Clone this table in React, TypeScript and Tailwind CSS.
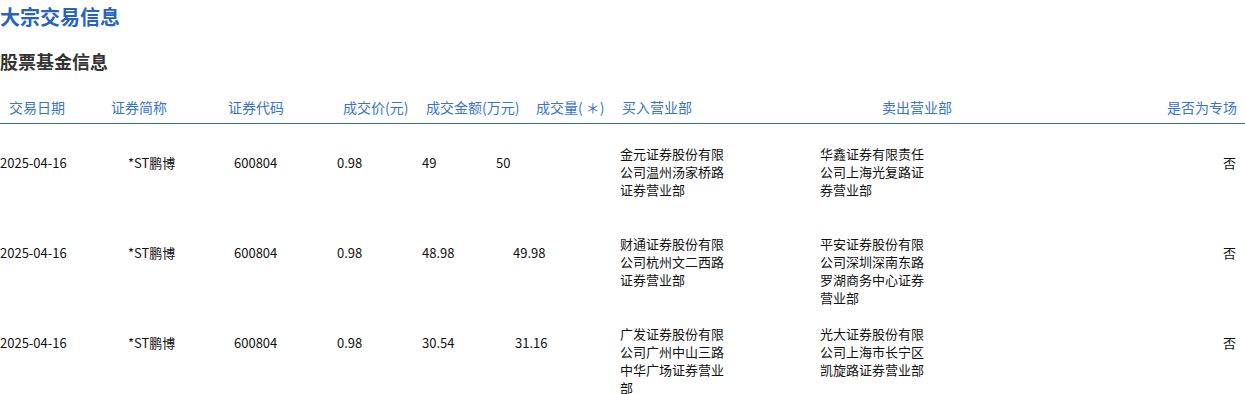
import React from 'react';

type Trade = {
  date: string;
  name: string;
  code: string;
  price: string;
  amount: string;
  volume: string;
  volPad: string;
  buyer: string;
  seller: string;
  special: string;
};

const trades: Trade[] = [
  {
    date: '2025-04-16',
    name: '*ST鹏博',
    code: '600804',
    price: '0.98',
    amount: '49',
    volume: '50',
    volPad: 'pl-0',
    buyer: '金元证券股份有限公司温州汤家桥路证券营业部',
    seller: '华鑫证券有限责任公司上海光复路证券营业部',
    special: '否',
  },
  {
    date: '2025-04-16',
    name: '*ST鹏博',
    code: '600804',
    price: '0.98',
    amount: '48.98',
    volume: '49.98',
    volPad: 'pl-[17px]',
    buyer: '财通证券股份有限公司杭州文二西路证券营业部',
    seller: '平安证券股份有限公司深圳深南东路罗湖商务中心证券营业部',
    special: '否',
  },
  {
    date: '2025-04-16',
    name: '*ST鹏博',
    code: '600804',
    price: '0.98',
    amount: '30.54',
    volume: '31.16',
    volPad: 'pl-[19px]',
    buyer: '广发证券股份有限公司广州中山三路中华广场证券营业部',
    seller: '光大证券股份有限公司上海市长宁区凯旋路证券营业部',
    special: '否',
  },
];

const headers = [
  { label: '交易日期', cls: 'w-[111px] pl-[9px]' },
  { label: '证券简称', cls: 'w-[117px]' },
  { label: '证券代码', cls: 'w-[115px]' },
  { label: '成交价(元)', cls: 'w-[83px]' },
  { label: '成交金额(万元)', cls: 'w-[110px]' },
  { label: '成交量( ＊)', cls: 'w-[86px]' },
  { label: '买入营业部', cls: 'w-[260px]' },
  { label: '卖出营业部', cls: '' },
];

export default function App() {
  return (
    <div className="w-[1245px] h-[394px] overflow-hidden bg-white font-['Noto_Sans_CJK_SC','Noto_Sans',sans-serif]">
      <h1 className="pt-[3px] text-[20px] leading-[28px] font-bold text-[#2862c0]">大宗交易信息</h1>
      <h2 className="mt-[17px] text-[18px] leading-[26px] font-bold text-[#333333]">股票基金信息</h2>

      <div className="mt-[23px] flex items-center border-b border-[#2f6cc2] pb-[6px] text-[14px] leading-[20px] text-[#3a74c8]">
        {headers.map((h) => (
          <div key={h.label} className={`shrink-0 whitespace-pre ${h.cls}`}>
            {h.label}
          </div>
        ))}
        <div className="ml-auto pr-[8px]">是否为专场</div>
      </div>

      {trades.map((t, i) => (
        <div key={i} className="flex h-[90px] text-[13px] leading-[18px] text-[#111111]">
          <div className="w-[128px] shrink-0 pt-[30px]">{t.date}</div>
          <div className="w-[106px] shrink-0 pt-[30px]">{t.name}</div>
          <div className="w-[103px] shrink-0 pt-[30px]">{t.code}</div>
          <div className="w-[85px] shrink-0 pt-[30px]">{t.price}</div>
          <div className="w-[74px] shrink-0 pt-[30px]">{t.amount}</div>
          <div className={`w-[124px] shrink-0 pt-[30px] ${t.volPad}`}>{t.volume}</div>
          <div className="w-[200px] shrink-0 pt-[21px]">
            <div className="w-[105px]">{t.buyer}</div>
          </div>
          <div className="flex-1 pt-[21px]">
            <div className="w-[105px]">{t.seller}</div>
          </div>
          <div className="shrink-0 pt-[30px] pr-[9px]">{t.special}</div>
        </div>
      ))}
    </div>
  );
}
